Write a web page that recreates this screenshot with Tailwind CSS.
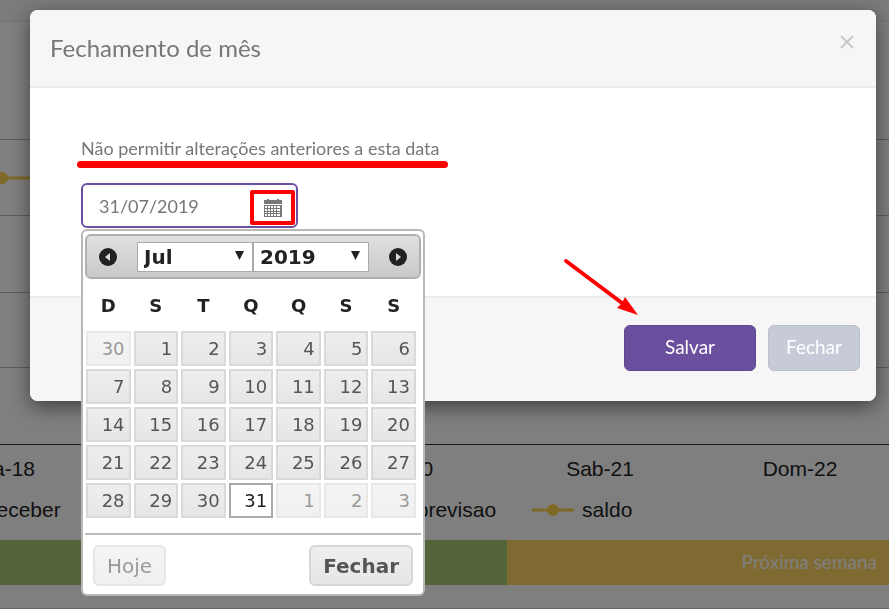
<!DOCTYPE html>
<html lang="pt-BR">
<head>
    <meta charset="UTF-8">
    <meta name="viewport" content="width=device-width, initial-scale=1.0">
    <title>Fechamento de mês</title>
    <script src="https://cdn.jsdelivr.net/npm/@tailwindcss/browser@4"></script>
</head>
<body class="bg-white min-h-screen overflow-hidden font-['Lato',sans-serif]">

    <!-- Cash flow page -->
    <main>
        <div class="h-[22px] bg-[#f6f6f6] border-b border-[#e4e4e4]"></div>
        <div class="h-[118px] border-b border-[#bbb]"></div>
        <div class="h-[76px] border-b border-[#bbb] flex items-center">
            <svg class="w-[60px] h-3 -ml-1" viewBox="0 0 60 12">
                <path d="M0 6H60" stroke="#ffd24d" stroke-width="3"/>
                <circle cx="6" cy="6" r="6" fill="#ffd24d"/>
            </svg>
        </div>
        <div class="h-[77px] border-b border-[#bbb]"></div>
        <div class="h-[75px] border-b border-[#bbb]"></div>
        <div class="h-[77px] border-b border-[#333]"></div>

        <div class="flex -ml-[100px] h-12 items-center text-[21px] text-[#222] text-center font-['Liberation_Sans',sans-serif]">
            <span class="w-[200px] shrink-0">Qua-18</span>
            <span class="w-[200px] shrink-0"></span>
            <span class="w-[200px] shrink-0">Sex-20</span>
            <span class="w-[200px] shrink-0">Sab-21</span>
            <span class="w-[200px] shrink-0">Dom-22</span>
        </div>
        <div class="flex gap-9 -ml-7 h-[34px] items-center text-[21px] text-[#222] whitespace-nowrap font-['Liberation_Sans',sans-serif]">
            <span>a receber</span>
            <span class="w-[234px]"></span>
            <span class="flex items-center gap-2">
                <svg class="w-[42px] h-3" viewBox="0 0 42 12">
                    <path d="M0 6H42" stroke="#a6ca70" stroke-width="3"/>
                    <circle cx="21" cy="6" r="6" fill="#a6ca70"/>
                </svg>
                previsao
            </span>
            <span class="flex items-center gap-2">
                <svg class="w-[42px] h-3" viewBox="0 0 42 12">
                    <path d="M0 6H42" stroke="#ffd24d" stroke-width="3"/>
                    <circle cx="21" cy="6" r="6" fill="#ffd24d"/>
                </svg>
                saldo
            </span>
        </div>
        <div class="flex mt-[13px] h-[45px] text-[19px]">
            <div class="w-[57%] bg-[#a6ca70]"></div>
            <div class="flex-1 bg-[#fed662] text-white flex items-center justify-end pr-3">Próxima semana</div>
        </div>
        <div class="h-6 border-b border-[#cbc8d4]"></div>
    </main>

    <!-- Modal -->
    <div class="fixed inset-0 bg-black/50 pt-[10px] pl-[30px] pr-[13px]">
        <section role="dialog" aria-labelledby="modalTitle" class="relative bg-white rounded-lg shadow-[0_6px_20px_rgba(0,0,0,0.5)] text-[#777]">
            <header class="flex items-center justify-between h-[78px] px-5 bg-[#f6f6f6] border-b-2 border-[#eaeaea] rounded-t-lg">
                <h2 id="modalTitle" class="text-2xl">Fechamento de mês</h2>
                <button type="button" aria-label="Fechar janela" class="p-0.5 -mt-3 text-[#c8c8c8]">
                    <svg class="w-[14px] h-[14px]" viewBox="0 0 14 14" fill="none" stroke="currentColor" stroke-width="2">
                        <path d="M1 1L13 13M13 1L1 13"/>
                    </svg>
                </button>
            </header>

            <div class="h-[208px] pl-[51px] pt-12">
                <label for="closingDate" class="relative inline-block text-[18px] leading-6">
                    Não permitir alterações anteriores a esta data
                    <span class="absolute -left-1 -right-2 top-[25px] h-[7px] rounded-sm bg-[#f00]"></span>
                </label>

                <div class="relative w-[217px] mt-[22px]">
                    <input id="closingDate" type="text" value="31/07/2019" class="block w-full h-[45px] pl-4 pr-12 text-[18px] bg-white border-2 border-[#6b509f] rounded-md outline-none">
                    <button type="button" aria-label="Abrir calendário" class="absolute right-[3px] top-[7px] w-[45px] h-[35px] flex items-center justify-center border-4 border-[#f00] rounded-xs text-[#777]">
                        <svg class="w-[18px] h-[18px]" viewBox="0 0 18 18" fill="currentColor">
                            <path d="M0 1h3V0h2v1h8V0h2v1h3v4H0z"/>
                            <path fill-rule="evenodd" d="M0 6h18v12H0zM1 7v2h2V7zM4 7v2h2V7zM7 7v2h2V7zM10 7v2h2V7zM13 7v2h3V7zM1 10v2h2v-2zM4 10v2h2v-2zM7 10v2h2v-2zM10 10v2h2v-2zM13 10v2h3v-2zM1 13v1h2v-1zM4 13v1h2v-1zM7 13v1h2v-1zM10 13v1h2v-1zM13 13v1h3v-1zM1 15v2h2v-2zM4 15v2h2v-2zM7 15v2h2v-2zM10 15v2h2v-2zM13 15v2h3v-2z"/>
                        </svg>
                    </button>

                    <!-- Datepicker -->
                    <div class="absolute left-0 top-[46px] z-10 w-[344px] pb-2 bg-white border-2 border-[#b8b8b8] rounded-md text-[#222] font-['DejaVu_Sans',sans-serif]">
                        <div class="flex items-center justify-between mx-0.5 mt-[3px] h-[45px] px-3 border-2 border-[#b0b0b0] rounded-md bg-linear-to-b from-[#e0e0e0] to-[#c9c9c9]">
                            <button type="button" aria-label="Mês anterior">
                                <svg class="w-[18px] h-[18px]" viewBox="0 0 18 18">
                                    <circle cx="9" cy="9" r="9" fill="#222"/>
                                    <path d="M11 5v8L6 9z" fill="#ddd"/>
                                </svg>
                            </button>
                            <div class="flex">
                                <div class="relative">
                                    <select aria-label="Mês" class="block appearance-none w-[116px] h-[30px] pl-1.5 text-[20px] leading-6 font-bold bg-white border border-[#aaa]">
                                        <option>Jul</option>
                                    </select>
                                    <svg class="absolute right-[9px] top-[9px] w-[9px] h-[9px] pointer-events-none" viewBox="0 0 9 9"><path d="M0 0h9L4.500 9z" fill="#222"/></svg>
                                </div>
                                <div class="relative">
                                    <select aria-label="Ano" class="block appearance-none w-[116px] h-[30px] pl-1.5 text-[20px] leading-6 font-bold bg-white border border-[#aaa]">
                                        <option>2019</option>
                                    </select>
                                    <svg class="absolute right-[9px] top-[9px] w-[9px] h-[9px] pointer-events-none" viewBox="0 0 9 9"><path d="M0 0h9L4.500 9z" fill="#222"/></svg>
                                </div>
                            </div>
                            <button type="button" aria-label="Próximo mês">
                                <svg class="w-[18px] h-[18px]" viewBox="0 0 18 18">
                                    <circle cx="9" cy="9" r="9" fill="#222"/>
                                    <path d="M7 5v8l5-4z" fill="#ddd"/>
                                </svg>
                            </button>
                        </div>

                        <table class="w-[336px] table-fixed border-separate border-spacing-[3px] text-[18px]">
                            <thead>
                                <tr class="h-[46px]">
                                    <th>D</th><th>S</th><th>T</th><th>Q</th><th>Q</th><th>S</th><th>S</th>
                                </tr>
                            </thead>
                            <tbody id="days"></tbody>
                        </table>

                        <div class="flex items-center justify-between mx-0.5 mt-3 pt-[10px] px-2 border-t-2 border-[#bbb]">
                            <button type="button" class="h-[41px] px-3 text-[20px] text-[#555] border-2 border-[#d6d6d6] rounded-md bg-linear-to-b from-[#eee] to-[#e6e6e6] opacity-60">Hoje</button>
                            <button type="button" class="h-[41px] px-3 text-[20px] font-bold text-[#555] border-2 border-[#d6d6d6] rounded-md bg-linear-to-b from-[#eee] to-[#e6e6e6]">Fechar</button>
                        </div>
                    </div>
                </div>
            </div>

            <footer class="flex items-center justify-end gap-3 h-[105px] pr-4 pb-1 bg-[#f6f6f6] border-t-2 border-[#eaeaea] rounded-b-lg text-[19px] text-white">
                <button type="button" class="w-[132px] h-[46px] bg-[#694f9d] border border-[#5f468f] rounded-md">Salvar</button>
                <button type="button" class="w-[92px] h-[46px] bg-[#c7cbd7] border border-[#bcc0cf] rounded-md">Fechar</button>
            </footer>

            <!-- Arrow to the save button -->
            <svg class="absolute right-[238px] bottom-[84px] w-[76px] h-[60px] pointer-events-none" viewBox="0 0 76 60">
                <path d="M4 4L60 46" stroke="#f00" stroke-width="4" stroke-linecap="round"/>
                <path d="M76 58L55 51L60 46L63 40z" fill="#f00"/>
            </svg>
        </section>
    </div>

    <script>
        const days = document.getElementById("days");
        // Sunday 30 June is the first day of the grid
        for (let week = 0; week < 5; week++) {
            let row = "";
            for (let i = 0; i < 7; i++) {
                const date = new Date(2019, 5, 30 + week * 7 + i);
                let look = "text-[#555] border-[#d9d9d9] bg-linear-to-b from-[#eee] to-[#e6e6e6]";
                if (date.getMonth() !== 6) look += " opacity-60";
                if (date.getMonth() === 6 && date.getDate() === 31) look = "text-[#212121] border-[#aaa] bg-white";
                row += `<td class="p-0"><button type="button" class="block w-full h-[35px] pr-1 text-right border-2 ${look}">${date.getDate()}</button></td>`;
            }
            days.innerHTML += `<tr>${row}</tr>`;
        }
    </script>

</body>
</html>
